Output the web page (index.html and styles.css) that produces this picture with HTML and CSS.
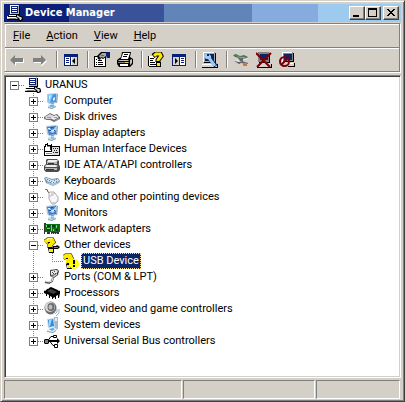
FILE: index.html
```html
<!DOCTYPE html>
<html lang="en">
<head>
<meta charset="utf-8">
<title>Device Manager</title>
<link rel="stylesheet" href="styles.css">
</head>
<body>
<svg class="sprite" aria-hidden="true">
  <symbol id="pc" viewBox="0 0 16 16">
    <path fill="#b8b5ae" d="M3 0h9v9H3z"/><path fill="#fff" d="M3 0h8v1H4v8H3z"/>
    <path fill="#000" d="M12 1h1v9H4V9h8z"/><path fill="#0a1f78" d="M4 1h7v7H4z"/>
    <path fill="#fff" d="M5 2h5v1H5zM5 4h5v1H5zM5 6h5v1H5z"/>
    <path fill="#d6d3ce" d="M2 10h10v1H2zM0 11h12v3H0z"/><path fill="#fff" d="M2 10h10v1H2zM0 12h11v1H0z"/>
    <path fill="#000" d="M0 14h12v1H0zM12 11h1v3h-1zM1 11h10v1H1z"/><path fill="#808080" d="M2 13h7v1H2z"/>
    <path fill="#000" d="M9 9h2l2 2h2l1 2v2l-2 1h-2l-1-2-2-2z"/><path fill="#d6d3ce" d="M10 10l3 2h1l1 1-1 2h-1l-1-2-2-1z"/>
  </symbol>
  <symbol id="monitor" viewBox="0 0 16 16">
    <path fill="#b4cbdc" d="M3 1l9-1 2 1-1 9-8 1-2-2z"/><path fill="#3f94e6" d="M4 2l8-1v8l-7 1z"/>
    <path fill="#86c8fa" d="M4 2l5-1-3 9H5z"/><path fill="#d4edff" d="M5 3l2-1-1 4H5zM9 5l2-1v3L9 8z"/>
    <path fill="#8fa3b2" d="M7 10h3v2H7zM13 1h1l-1 9h-1z"/>
    <path fill="#cfe0ec" d="M4 12l5-1 3 2-4 3-4-2z"/><path fill="#8399a9" d="M4 14l4 1 4-2v1l-4 2-4-1z"/>
    <path fill="#58b9f4" d="M6 12h4v2H6z"/>
  </symbol>
  <symbol id="display" viewBox="0 0 16 16">
    <path fill="#b4cbdc" d="M2 1l10-1 2 1-1 9-8 1-2-2z"/><path fill="#3480d4" d="M3 2l9-1v8l-7 1z"/>
    <path fill="#a9d8fb" d="M4 3h2l1 2 3-1 1-2h1v3L9 8 6 7z"/><path fill="#1b4d94" d="M7 2h2v1H7zM10 5h1v1h-1zM5 5h2v1H5z"/>
    <path fill="#e8f6ff" d="M4 3h2v1H4zM8 5h2v1H8z"/>
    <path fill="#8fa3b2" d="M7 10h3v2H7zM13 1h1l-1 9h-1z"/>
    <path fill="#cfe0ec" d="M4 12l5-1 3 2-4 3-4-2z"/><path fill="#8399a9" d="M4 14l4 1 4-2v1l-4 2-4-1z"/>
    <path fill="#7cc4f0" d="M7 12h3v2H7z"/>
  </symbol>
  <symbol id="disk" viewBox="0 0 16 16">
    <path fill="#6d6d6d" d="M0 8l6-4 4 2 3-1 3 3v2l-6 3-4-2H3L0 10z"/><path fill="#d8d8d8" d="M1 8l5-3 4 2-4 3H2z"/>
    <path fill="#ececec" d="M6 9l6-3 3 2-5 3z"/><path fill="#999" d="M3 8h4v1H3zM10 8h3v1h-3z"/>
    <path fill="#b5b5b5" d="M7 10l3 2 5-3v1l-5 2-3-2z"/>
  </symbol>
  <symbol id="hid" viewBox="0 0 16 16">
    <path fill="#000" d="M0 5h1V3h2V2h1v2h3V3h1v2h8v10H0z"/><path fill="#fff" d="M1 6h6v4H1zM2 4h1v2H2zM1 11h9v3H1z"/>
    <path fill="#888" d="M3 5h3v1H3zM2 12h6v1H2z"/>
    <path fill="#ddd" d="M8 6h7v8H8z"/><path fill="#222" d="M9 7h1v1H9zM11 7h1v1h-1zM13 7h1v1h-1zM10 9h1v1h-1zM12 9h1v1h-1zM9 11h1v1H9zM11 11h3v1h-3zM6 6h1v3H6z"/>
  </symbol>
  <symbol id="ide" viewBox="0 0 16 16">
    <path fill="#4d4d4d" d="M3 2h10l2 2v4l1 1v4l-2 2H2l-2-2V9l2-2V3z"/><path fill="#eee" d="M4 3h9l1 1-2 1H3zM2 8h10l2 1-2 1H1z"/>
    <path fill="#b4b4b4" d="M3 5h10v2H3zM1 11h12v2H1z"/><path fill="#333" d="M4 6h6v1H4zM2 12h8v1H2z"/>
  </symbol>
  <symbol id="keyboard" viewBox="0 0 16 16">
    <path fill="#7592ac" d="M0 5l2-1 6 2 6-1 2 3-1 2-6 3-7-3z"/><path fill="#d3e4f1" d="M1 5h2l5 2 6-1 1 2-6 3-6-3z"/>
    <path fill="#5085b5" d="M3 6h1v1H3zM5 7h1v1H5zM7 8h1v1H7zM10 7h1v1h-1zM12 6h1v1h-1zM12 8h1v1h-1zM9 9h1v1H9zM6 9h1v1H6z"/>
    <path fill="#acc6dc" d="M3 9l6 2 6-2v1l-6 3-6-3z"/>
  </symbol>
  <symbol id="mouse" viewBox="0 0 16 16">
    <path fill="none" stroke="#555" d="M1 0q3 0 3 3l2 1"/><path fill="#f7f7f7" stroke="#aaa" d="M6 3h4l4 5v4l-3 3H8l-3-5V4z"/>
    <path fill="none" stroke="#bbb" d="M5 8l3-2 3-2M8 4v3"/><path fill="#ccc" d="M8 13h4l1-2v2l-2 2H8z"/>
  </symbol>
  <symbol id="net" viewBox="0 0 16 16">
    <path fill="#087018" d="M1 3h15v8H1z"/><path fill="#303030" d="M0 2h2v1H1v10H0zM3 11h3v2H3zM7 11h8v2H7z"/>
    <path fill="#0b3a10" d="M3 4h3v2H3zM8 4h3v2H8zM3 8h3v2H3zM12 8h2v2h-2z"/>
    <path fill="#70df65" d="M2 4h1v2H2zM7 4h1v6H7zM12 4h1v3h-1zM9 8h1v2H9zM3 7h3v1H3z"/><path fill="#d8d24a" d="M8 12h1v1H8zM10 12h1v1h-1zM12 12h1v1h-1z"/>
  </symbol>
  <symbol id="question" viewBox="0 0 16 16">
    <path fill="#000" d="M9 9h3l1-1 3 2-2 2h-4l-1 1H8z"/><path fill="#8c8960" d="M10 10h4v1h-4z"/>
    <path fill="none" stroke="#000" stroke-width="5" d="M1 5l3-2h4l1 2-3 3v3"/><path fill="#000" d="M4 11h6v5H5z"/>
    <path fill="none" stroke="#ffe800" stroke-width="4" d="M1 5l3-2h4l1 2-3 3v2"/><path fill="#ffe800" d="M5 12h4v3H5z"/>
    <path fill="#000" d="M4 5h2v1H4z"/><path fill="#fffbb0" d="M3 2l2-1h3v1H5L3 4z"/>
  </symbol>
  <symbol id="warning" viewBox="0 0 16 16">
    <path fill="none" stroke="#000" stroke-width="5" d="M0 5l3-2h4l1 2-2 3v3"/><path fill="#000" d="M3 11h6v5H4z"/>
    <path fill="none" stroke="#ffe800" stroke-width="4" d="M0 5l3-2h4l1 2-3 3v2"/><path fill="#ffe800" d="M4 12h3v3H4z"/>
    <circle cx="11" cy="11" r="5" fill="#ff0"/><path fill="#000" d="M10 7h2v4h-2zM10 12h2v2h-2zM3 5h2v1H3z"/>
  </symbol>
  <symbol id="port" viewBox="0 0 16 16">
    <path fill="#444" d="M6 1l7-1 2 2-1 4-4 3-4-2z"/><path fill="#ececec" d="M7 2l5-1 2 1-2 3-5 1z"/><path fill="#ccc" d="M7 7l4-1 2-2v2l-3 2z"/>
    <path fill="#444" d="M8 3h1v1H8zM10 2h1v1h-1zM11 4h1v1h-1zM9 4h1v1H9z"/>
    <path fill="none" stroke="#555" stroke-width="2" d="M9 9l-1 3-3 2-4-1"/><path fill="none" stroke="#ddd" d="M9 9l-1 3-3 1-4-1"/>
  </symbol>
  <symbol id="cpu" viewBox="0 0 16 16">
    <path fill="#000" d="M0 6l5-3 2-1 9 4v2l-1 5h-1v-3l-2 1v3h-1v-2l-2 1v1H8v-2l-2-1v2H5v-3l-2-1v2H2V9L0 8z"/>
    <path fill="#3c3c3c" d="M3 6l4-2 6 3-4 2z"/><path fill="#aaa" d="M1 5h1V4h1v1H2v1H1zM4 3h1v1H4zM14 5h1v1h-1z"/>
  </symbol>
  <symbol id="sound" viewBox="0 0 16 16">
    <ellipse cx="6.500" cy="7" rx="6" ry="6.500" fill="#6e6e6e"/><ellipse cx="6" cy="6" rx="5" ry="5" fill="#dadada"/>
    <ellipse cx="7" cy="6" rx="3.500" ry="4" fill="#6a6a6a"/><ellipse cx="6.500" cy="6" rx="2" ry="2.500" fill="#bdbdbd"/>
    <path fill="none" stroke="#91b3d3" d="M11 13l2-2v-3M12 15l3-3V8"/>
  </symbol>
  <symbol id="system" viewBox="0 0 16 16">
    <path fill="#a5b8c6" d="M10 0h4v12l-3 2-2-1z"/><path fill="#c4dae8" d="M3 2l7-1 1 9-7 1z"/><path fill="#3489e2" d="M4 3l5-1 1 7-5 1z"/>
    <path fill="#9ed8ff" d="M5 3l3-1-2 7H5z"/><path fill="#e7f0f5" d="M11 1h2v3h-2zM3 12l6-2 4 2-4 4-6-2z"/>
    <path fill="#58a9e8" d="M5 12l4-1 2 1-3 2z"/><path fill="#8299a9" d="M3 14l6 1 3-2v1l-3 2-6-1z"/>
  </symbol>
  <symbol id="usb" viewBox="0 0 16 16">
    <path fill="none" stroke="#000" stroke-width="2" d="M4 8h10"/><path fill="none" stroke="#000" d="M4 7.500l3-4h3M6 8.500l3 4h2"/>
    <path fill="#000" d="M1 6h3l1 1v3l-1 1H1l-1-1V7zM13 5l3 3-3 3z"/><path fill="#808080" d="M1 7h3v3H1z"/>
    <path fill="#fff" stroke="#000" d="M9.500 2.500h3v2h-3zM10.500 11.500h3v3h-3z"/>
  </symbol>
  <symbol id="back" viewBox="0 0 16 16">
    <path fill="#fff" d="M2 9l5 5v-3h8V7h-1v3H6v2z"/><path fill="#808080" d="M1 8l5-5v3h8v4H6v3z"/>
  </symbol>
  <symbol id="forward" viewBox="0 0 16 16">
    <path fill="#fff" d="M2 7h7V4l6 5-5 5H9v-3H2z"/><path fill="#808080" d="M1 6h8V3l5 5-5 5v-3H1z"/>
  </symbol>
  <symbol id="show-tree" viewBox="0 0 16 16">
    <path fill="#0a1f78" d="M1 2h14v12H1z"/><path fill="#fff" d="M2 5h5v8H2zM8 5h6v8H8z"/><path fill="#d6d3ce" d="M9 5h5v8H9z"/>
    <path fill="#0a1f78" d="M3 6h3v1H3zM3 8h3v1H3zM3 10h3v1H3z"/><path fill="#000" d="M12 6v6L9 9z"/>
  </symbol>
  <symbol id="show-pane" viewBox="0 0 16 16">
    <path fill="#0a1f78" d="M1 2h14v12H1z"/><path fill="#d6d3ce" d="M2 5h6v8H2z"/><path fill="#fff" d="M9 5h5v8H9z"/>
    <path fill="#0a1f78" d="M10 6h3v1h-3zM10 8h3v1h-3zM10 10h3v1h-3z"/><path fill="#000" d="M4 6v6l3-3z"/>
  </symbol>
  <symbol id="props" viewBox="0 0 16 16">
    <path fill="#000" d="M0 4h12v11H0z"/><path fill="#fff" d="M1 5h10v9H1z"/><path fill="#000" d="M2 7h1v1H2zM4 8h4v1H4zM2 10h1v1H2zM4 10h5v1H4zM2 12h1v1H2zM4 12h5v1H4z"/>
    <path fill="#000" d="M3 4l4-4h5v5l-3 2-2-1-1 2-2-1z"/><path fill="#a8a8a8" d="M5 4l3-3h4v3l-3 2-1-1-2 1z"/><path fill="#0a246a" d="M12 0h4v6h-3l-1-2z"/><path fill="#666" d="M7 3h3v1H7zM6 5h1v1H6z"/>
  </symbol>
  <symbol id="print" viewBox="0 0 16 16">
    <path fill="#000" d="M5 0h9l-1 5 3 2v5l-3 3H2l-2-3V8l4-3z"/><path fill="#fff" d="M6 1h7l-2 6H4z"/><path fill="#000" d="M7 2h4v1H7zM6 4h4v1H6z"/>
    <path fill="#c6c3bd" d="M2 8h9l1 1H1zM13 8l2-1v4l-2 2z"/><path fill="#808080" d="M1 10h11v1H1z"/><path fill="#fff" d="M3 12h8v2H3z"/><path fill="#e8cf20" d="M8 10h3v1H8z"/>
  </symbol>
  <symbol id="help" viewBox="0 0 16 16">
    <path fill="#000" d="M1 4h10v11H1z"/><path fill="#fff" d="M1 4h9v10H1z"/><path fill="#000" d="M2 6h4v1H2zM2 8h3v1H2zM2 10h5v1H2zM2 12h6v1H2zM0 4h1v10H0z"/>
    <path fill="none" stroke="#000" stroke-width="5" d="M5 4l3-2h4l1 2-3 4v2"/><path fill="#000" d="M8 10h5v5H8z"/>
    <path fill="none" stroke="#ffe800" stroke-width="3" d="M6 4l2-2h4l1 2-3 4v1"/><path fill="#ffe800" d="M9 11h3v3H9z"/>
  </symbol>
  <symbol id="scan" viewBox="0 0 16 16">
    <path fill="#a8a8a8" d="M1 0h12v11H1z"/><path fill="#fff" d="M1 0h11v1H2v9H1z"/><path fill="#000" d="M13 1h1v10H2v-1h11zM15 12h1v4H0v-1h15z"/><path fill="#0a246a" d="M3 2h9v7H3z"/>
    <path fill="#d6d3ce" d="M0 12h15v3H0z"/><path fill="#fff" d="M0 12h14v1H0z"/><path fill="none" stroke="#0c2a70" stroke-width="4" d="M6 5l8 9"/><path fill="#9fcdf2" d="M3 2h2v2h2V2l2 2v2l5 7-1 1h-2L6 7H4L2 5z"/>
  </symbol>
  <symbol id="update" viewBox="0 0 16 16">
    <path fill="#50745b" d="M0 3l3-1 4 2 4-1 2 1 2 1-2 2H8L6 6 2 5z"/><path fill="#62c56d" d="M3 3l4 2h4l2 1H7z"/>
    <path fill="#e4e4e4" d="M8 7l7-1v1l-4 1zM1 9l6-2 3 1-4 2z"/><path fill="#666" d="M5 6h5v3H7zM1 9l5 1 3-1 6 2v1l-5-1-4 1z"/><path fill="#b97a48" d="M10 11l4 1v2h-3l-3-2z"/><path fill="#fff" d="M7 11l3 1-1 1z"/>
  </symbol>
  <symbol id="uninstall" viewBox="0 0 16 16">
    <path fill="#848284" d="M2 0h11v10H2z"/><path fill="#000" d="M13 1h1v10H3v-1h10zM15 12h1v4H1v-1h14z"/><path fill="#0a246a" d="M4 2h8v6H4z"/><path fill="#d6d3ce" d="M1 12h14v3H1z"/>
    <path fill="none" stroke="#780008" stroke-width="2" d="M0 1l14 14M15 1L1 15"/>
  </symbol>
  <symbol id="disable" viewBox="0 0 16 16">
    <path fill="#848284" d="M3 0h11v10H3z"/><path fill="#fff" d="M3 0h10v1H4v9H3z"/><path fill="#000" d="M14 1h1v9H4V9h10zM15 11h1v4H9v-1h6z"/><path fill="#0a246a" d="M5 2h8v6H5z"/><path fill="#d6d3ce" d="M8 11h7v3H8z"/><path fill="#fff" d="M8 11h6v1H8z"/>
    <circle cx="5.500" cy="9.500" r="4.500" fill="none" stroke="#780008" stroke-width="2"/><path fill="none" stroke="#780008" stroke-width="2" d="M2 13l7-7"/>
  </symbol>
</svg>
<div class="window">
  <header class="titlebar">
    <svg class="icon"><use href="#pc"/></svg>
    <h1>Device Manager</h1>
    <div class="controls">
      <button aria-label="Minimize"><svg viewBox="0 0 12 10"><path d="M2 7h6v2H2z"/></svg></button>
      <button aria-label="Maximize"><svg viewBox="0 0 12 10"><path d="M1 0h9v9H1zM2 2v6h7V2z" fill-rule="evenodd"/></svg></button>
      <button class="close" aria-label="Close"><svg viewBox="0 0 12 10"><path d="M2 1h2v1h1v1h2V2h1V1h2v1H9v1H8v1H7v1h1v1h1v1h1v1H8V7H7V6H5v1H4v1H2V7h1V6h1V5h1V4H4V3H3V2H2z"/></svg></button>
    </div>
  </header>
  <div class="bars">
    <nav class="menu">
      <button><u>F</u>ile</button><button><u>A</u>ction</button><button><u>V</u>iew</button><button><u>H</u>elp</button>
    </nav>
    <div class="toolbar">
      <div class="group"><button aria-label="Back"><svg class="icon"><use href="#back"/></svg></button><button aria-label="Forward"><svg class="icon"><use href="#forward"/></svg></button></div>
      <div class="group"><button aria-label="Show console tree"><svg class="icon"><use href="#show-tree"/></svg></button></div>
      <div class="group"><button aria-label="Properties"><svg class="icon"><use href="#props"/></svg></button><button aria-label="Print"><svg class="icon"><use href="#print"/></svg></button></div>
      <div class="group"><button aria-label="Help"><svg class="icon"><use href="#help"/></svg></button><button aria-label="Show action pane"><svg class="icon"><use href="#show-pane"/></svg></button></div>
      <div class="group"><button aria-label="Scan for hardware changes"><svg class="icon"><use href="#scan"/></svg></button></div>
      <div class="group"><button aria-label="Update driver"><svg class="icon"><use href="#update"/></svg></button><button aria-label="Uninstall"><svg class="icon"><use href="#uninstall"/></svg></button><button aria-label="Disable"><svg class="icon"><use href="#disable"/></svg></button></div>
    </div>
  </div>
  <main class="tree">
    <ul class="root">
      <li>
        <div class="row"><button class="toggle open" aria-label="Collapse"></button><svg class="icon"><use href="#pc"/></svg><span class="label">URANUS</span></div>
        <ul class="branch">
          <li><div class="row"><button class="toggle" aria-label="Expand"></button><svg class="icon"><use href="#monitor"/></svg><span class="label">Computer</span></div></li>
          <li><div class="row"><button class="toggle" aria-label="Expand"></button><svg class="icon"><use href="#disk"/></svg><span class="label">Disk drives</span></div></li>
          <li><div class="row"><button class="toggle" aria-label="Expand"></button><svg class="icon"><use href="#display"/></svg><span class="label">Display adapters</span></div></li>
          <li><div class="row"><button class="toggle" aria-label="Expand"></button><svg class="icon"><use href="#hid"/></svg><span class="label">Human Interface Devices</span></div></li>
          <li><div class="row"><button class="toggle" aria-label="Expand"></button><svg class="icon"><use href="#ide"/></svg><span class="label">IDE ATA/ATAPI controllers</span></div></li>
          <li><div class="row"><button class="toggle" aria-label="Expand"></button><svg class="icon"><use href="#keyboard"/></svg><span class="label">Keyboards</span></div></li>
          <li><div class="row"><button class="toggle" aria-label="Expand"></button><svg class="icon"><use href="#mouse"/></svg><span class="label">Mice and other pointing devices</span></div></li>
          <li><div class="row"><button class="toggle" aria-label="Expand"></button><svg class="icon"><use href="#display"/></svg><span class="label">Monitors</span></div></li>
          <li><div class="row"><button class="toggle" aria-label="Expand"></button><svg class="icon"><use href="#net"/></svg><span class="label">Network adapters</span></div></li>
          <li>
            <div class="row"><button class="toggle open" aria-label="Collapse"></button><svg class="icon"><use href="#question"/></svg><span class="label">Other devices</span></div>
            <ul class="branch">
              <li><div class="row leaf"><svg class="icon"><use href="#warning"/></svg><span class="label selected">USB Device</span></div></li>
            </ul>
          </li>
          <li><div class="row"><button class="toggle" aria-label="Expand"></button><svg class="icon"><use href="#port"/></svg><span class="label">Ports (COM &amp; LPT)</span></div></li>
          <li><div class="row"><button class="toggle" aria-label="Expand"></button><svg class="icon"><use href="#cpu"/></svg><span class="label">Processors</span></div></li>
          <li><div class="row"><button class="toggle" aria-label="Expand"></button><svg class="icon"><use href="#sound"/></svg><span class="label">Sound, video and game controllers</span></div></li>
          <li><div class="row"><button class="toggle" aria-label="Expand"></button><svg class="icon"><use href="#system"/></svg><span class="label">System devices</span></div></li>
          <li><div class="row"><button class="toggle" aria-label="Expand"></button><svg class="icon"><use href="#usb"/></svg><span class="label">Universal Serial Bus controllers</span></div></li>
        </ul>
      </li>
    </ul>
  </main>
  <footer class="status"><span></span><span></span><span></span></footer>
</div>
</body>
</html>
```
FILE: styles.css
```css
* { box-sizing: border-box; }
body {
  margin: 0;
  background: #d4d0c8;
  color: #000;
  font: 11px/16px Tahoma, Roboto, sans-serif;
}
button {
  margin: 0;
  padding: 0;
  border: 0;
  background: none;
  color: inherit;
  font: inherit;
}
ul { list-style: none; margin: 0; padding: 0; }
.sprite { position: absolute; width: 0; height: 0; }
.icon { display: block; width: 16px; height: 16px; flex: none; }

.window {
  min-height: 100vh;
  display: flex;
  flex-direction: column;
  padding: 2px;
  border: 1px solid;
  border-color: #d4d0c8 #404040 #404040 #d4d0c8;
  box-shadow: inset 1px 1px #fff, inset -1px -1px #808080;
}
.window > * { margin: 0 1px; }

.titlebar {
  display: flex;
  align-items: center;
  height: 18px;
  margin-top: 1px;
  padding: 0 2px 0 3px;
  background: linear-gradient(90deg, #0b1f78 16.4%, #3a5299 0 40.4%, #6285b9 0 62.5%, #86abdf 0 79.2%, #9dcbf0 0);
}
.titlebar h1 {
  margin: 0 0 0 2px;
  flex: 1;
  color: #fff;
  font: bold 11px/16px Tahoma, "DejaVu Sans Condensed", sans-serif;
}
.controls { display: flex; }
.controls button {
  width: 16px;
  height: 14px;
  padding: 1px;
  border: 1px solid;
  border-color: #fff #404040 #404040 #fff;
  background: #d4d0c8;
  box-shadow: inset -1px -1px #808080;
}
.controls .close { margin-left: 2px; }
.controls svg { display: block; width: 12px; height: 10px; }

.bars {
  margin-top: 1px;
  border: 1px solid;
  border-color: #808080 #808080 #808080 #d4d0c8;
  box-shadow: 1px 1px #fff, inset 1px 1px #fff;
  margin-right: 2px;
}
.menu {
  display: flex;
  gap: 16px;
  height: 24px;
  padding: 0 8px;
  border-bottom: 1px solid #808080;
}
.toolbar {
  display: flex;
  height: 23px;
  padding: 3px 0 3px 4px;
  box-shadow: inset 0 1px #fff;
}
.group {
  display: flex;
  gap: 7px;
  padding: 0 8px 0 6px;
  border-left: 1px solid #808080;
  box-shadow: inset 1px 0 #fff;
}
.group:first-child { border-left: 0; padding-left: 0; box-shadow: none; }

.tree {
  flex: 1;
  margin-top: 3px;
  padding: 0 0 0 4px;
  border: 1px solid;
  border-color: #808080 #fff #fff #808080;
  background: #fff;
  box-shadow: inset 1px 1px #404040, inset -1px -1px #d4d0c8;
}
.root { padding: 1px 0 0 1px; }
.branch { padding-left: 19px; }
.branch > li {
  background: repeating-linear-gradient(#808080 0 1px, transparent 1px 2px) 4px 0 / 1px 100% no-repeat;
}
.branch > li:last-child { background-size: 1px 8px; }
.row { display: flex; height: 16px; align-items: center; }
.row .icon {
  width: 22px;
  padding-left: 6px;
  background: repeating-linear-gradient(90deg, #808080 0 1px, transparent 1px 2px) 0 8px / 6px 1px no-repeat;
}
.leaf .icon {
  width: 31px;
  padding-left: 15px;
  background-position: 4px 8px;
  background-size: 11px 1px;
}
.toggle {
  width: 9px;
  height: 9px;
  border: 1px solid #808080;
  background:
    linear-gradient(#000, #000) center / 5px 1px no-repeat,
    linear-gradient(#000, #000) center / 1px 5px no-repeat,
    #fff;
}
.toggle.open { background: linear-gradient(#000, #000) center / 5px 1px no-repeat, #fff; }
.label { margin-left: 2px; padding: 0 2px; white-space: nowrap; }
.selected {
  background: #0a246a;
  color: #fff;
  outline: 1px dotted #f5db95;
  outline-offset: -1px;
}

.status {
  display: grid;
  grid-template-columns: 178fr 132fr 84fr;
  gap: 1px;
  height: 19px;
  margin-top: 2px;
  margin-right: 2px;
}
.status span {
  border: 1px solid;
  border-color: #808080 #fff #fff #808080;
}
```
